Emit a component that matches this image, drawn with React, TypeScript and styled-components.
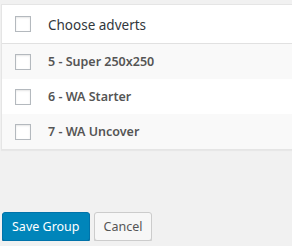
import styled, { createGlobalStyle } from 'styled-components';

const GlobalStyle = createGlobalStyle`
  html, body {
    margin: 0;
    padding: 0;
    background: #f1f1f1;
    font-family: "Noto Sans", "Open Sans", sans-serif;
    font-size: 14px;
    color: #444;
  }
`;

const Page = styled.div`
  padding: 4px 0 0 1px;
  overflow: hidden;
`;

// the list runs on past the right edge of the frame
const Table = styled.div`
  margin-right: -12px;
  background: #fff;
  border: 1px solid #e5e5e5;
  box-shadow: 0 1px 1px rgba(0, 0, 0, 0.04);
`;

const Row = styled.label<{ $alt?: boolean; $head?: boolean }>`
  display: flex;
  align-items: center;
  gap: 17px;
  height: ${({ $head }) => ($head ? '38px' : '35px')};
  padding: 0 0 0 13px;
  background: ${({ $alt }) => ($alt ? '#f9f9f9' : '#fff')};
  border-bottom: ${({ $head }) => ($head ? '1px solid #e1e1e1' : 'none')};
`;

const Box = styled.span`
  width: 14px;
  height: 14px;
  border: 1px solid #b4b9be;
  background: #fff;
  box-shadow: inset 0 1px 2px rgba(0, 0, 0, 0.1);
  flex: none;
`;

const HeadText = styled.span`
  font-size: 13.5px;
  color: #32373c;
  padding-top: 2px;
`;

const ItemText = styled.span`
  font-size: 12.5px;
  font-weight: 600;
  color: #555;
`;

const Actions = styled.div`
  display: flex;
  gap: 4px;
  margin-top: 62px;
  padding-left: 1px;
`;

const Button = styled.button<{ $primary?: boolean }>`
  height: 29px;
  padding: 0 9px;
  font-family: inherit;
  font-size: 12.5px;
  border-radius: 3px;
  border: 1px solid ${({ $primary }) => ($primary ? '#0073aa' : '#ccc')};
  background: ${({ $primary }) => ($primary ? '#0085ba' : '#f7f7f7')};
  color: ${({ $primary }) => ($primary ? '#fff' : '#555')};
  box-shadow: ${({ $primary }) => ($primary ? '0 1px 0 #006799' : '0 1px 0 #ccc')};
`;

const adverts = ['5 - Super 250x250', '6 - WA Starter', '7 - WA Uncover'];

export default function App() {
  return (
    <Page>
      <GlobalStyle />
      <Table>
        <Row $head>
          <Box />
          <HeadText>Choose adverts</HeadText>
        </Row>
        {adverts.map((name, i) => (
          <Row key={name} $alt={i % 2 === 0}>
            <Box />
            <ItemText>{name}</ItemText>
          </Row>
        ))}
      </Table>
      <Actions>
        <Button $primary>Save Group</Button>
        <Button>Cancel</Button>
      </Actions>
    </Page>
  );
}
